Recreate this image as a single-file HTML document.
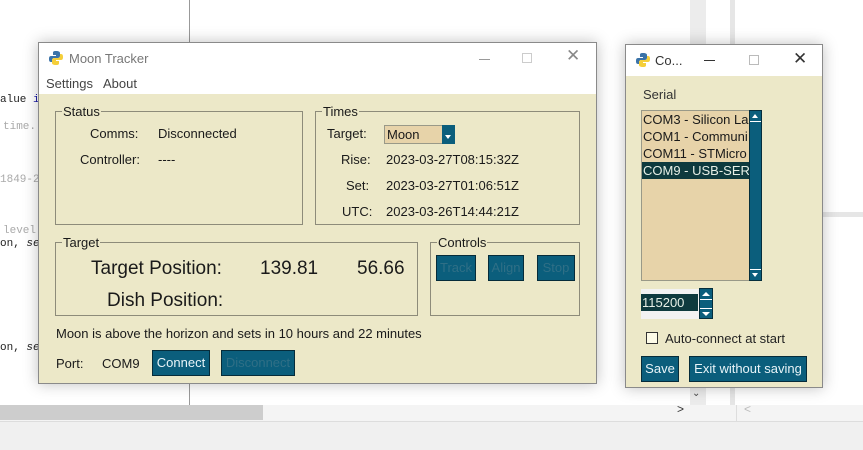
<!DOCTYPE html>
<html><head><style>
*{margin:0;padding:0;box-sizing:border-box}
body{width:863px;height:450px;position:relative;overflow:hidden;background:#fff;font-family:"Liberation Sans",sans-serif;font-size:13px;color:#1a1a1a}
.a{position:absolute;white-space:nowrap}
.code{font-family:"Liberation Mono",monospace;font-size:11px;color:#222}
.g{color:#aaa}
.win{position:absolute;background:#ECE8C8;border:1px solid #8a8a8a;box-shadow:0 0 14px rgba(0,0,0,.25)}
.tb{position:absolute;left:0;right:0;top:0;background:#fff}
.fr{position:absolute;border:1px solid #8d8b7a}
.fl{position:absolute;top:-8px;left:6px;background:#ECE8C8;padding:0 1px;font-size:13px}
.btn{position:absolute;background:#0B5E7C;border:1px solid #062c3a;color:#e8f4f8;text-align:center;font-size:13px;line-height:24px}
.dis{color:#2f6f86}
</style></head><body>
<div class="a" style="left:189px;top:0;width:1px;height:405px;background:#999"></div>
<div class="a" style="left:690px;top:0;width:16px;height:405px;background:#ececec"></div>
<div class="a" style="left:730px;top:0;width:5px;height:405px;background:#e6e6e6"></div>
<div class="a" style="left:822px;top:212px;width:41px;height:5px;background:#e6e6e6"></div>
<div class="a code" style="left:0;top:94px">alue <span style="color:#1a1aa6">in</span></div>
<div class="a code g" style="left:3px;top:121px">time.</div>
<div class="a code g" style="left:0;top:174px">1849-21</div>
<div class="a code g" style="left:3px;top:225px">level</div>
<div class="a code" style="left:0;top:238px">on, <i>sel</i></div>
<div class="a code" style="left:0;top:342px">on, <i>sel</i></div>
<div class="a" style="left:0;top:405px;width:863px;height:16px;background:#f4f4f4"></div>
<div class="a" style="left:0;top:405px;width:263px;height:15px;background:#cdcdcd"></div>
<div class="a" style="left:736px;top:405px;width:1px;height:16px;background:#ddd"></div>
<div class="a" style="left:677px;top:402px;font-size:12px;color:#333">&gt;</div>
<div class="a" style="left:744px;top:402px;font-size:12px;color:#bbb">&lt;</div>
<div class="a" style="left:0;top:421px;width:863px;height:29px;background:#f0f0f0;border-top:1px solid #ddd"></div>

<div class="win" style="left:38px;top:42px;width:559px;height:342px">
 <div class="tb" style="height:51px">
  <svg class="a" style="left:9px;top:7px" width="16" height="16" viewBox="0 0 16 16"><path d="M8 1C5 1 5 2 5 3v2h3v1H3C1 6 1 8 1 9s0 3 2 3h1v-2c0-1 1-2 2-2h4c1 0 2-1 2-2V3c0-1-1-2-4-2z" fill="#3b73a8"/><path d="M8 15c3 0 3-1 3-2v-2H8v-1h5c2 0 2-2 2-3s0-3-2-3h-1v2c0 1-1 2-2 2H6c-1 0-2 1-2 2v3c0 1 1 2 4 2z" fill="#f5cf3a"/></svg>
  <div class="a" style="left:30px;top:8px;color:#777;font-size:13px">Moon Tracker</div>
  <div class="a" style="left:440px;top:16px;width:11px;height:1px;background:#999"></div>
  <div class="a" style="left:483px;top:10px;width:10px;height:10px;border:1px solid #ccc"></div>
  <div class="a" style="left:527px;top:3px;font-size:17px;color:#888">✕</div>
  <div class="a" style="left:7px;top:33px;color:#444">Settings</div>
  <div class="a" style="left:64px;top:33px;color:#444">About</div>
 </div>
 <div class="fr" style="left:16px;top:68px;width:248px;height:114px"><div class="fl">Status</div></div>
 <div class="a" style="left:51px;top:83px">Comms:</div>
 <div class="a" style="left:119px;top:83px">Disconnected</div>
 <div class="a" style="left:41px;top:109px">Controller:</div>
 <div class="a" style="left:119px;top:109px">----</div>

 <div class="fr" style="left:276px;top:68px;width:265px;height:114px"><div class="fl">Times</div></div>
 <div class="a" style="left:288px;top:83px">Target:</div>
 <div class="a" style="left:345px;top:82px;width:61px;height:19px;background:#E7D3A9;border:1px solid #998;font-size:13px;line-height:17px;padding-left:2px">Moon</div>
 <div class="a" style="left:403px;top:82px;width:13px;height:19px;background:#0B5E7C"><div class="a" style="left:3px;top:10px;border-left:3px solid transparent;border-right:3px solid transparent;border-top:4px solid #fff"></div></div>
 <div class="a" style="left:302px;top:109px">Rise:</div>
 <div class="a" style="left:347px;top:109px">2023-03-27T08:15:32Z</div>
 <div class="a" style="left:307px;top:135px">Set:</div>
 <div class="a" style="left:347px;top:135px">2023-03-27T01:06:51Z</div>
 <div class="a" style="left:303px;top:161px">UTC:</div>
 <div class="a" style="left:347px;top:161px">2023-03-26T14:44:21Z</div>

 <div class="fr" style="left:16px;top:199px;width:363px;height:74px"><div class="fl">Target</div></div>
 <div class="a" style="left:52px;top:215px;font-size:19px">Target Position:</div>
 <div class="a" style="left:221px;top:215px;font-size:19px">139.81</div>
 <div class="a" style="left:318px;top:215px;font-size:19px">56.66</div>
 <div class="a" style="left:68px;top:247px;font-size:19px">Dish Position:</div>

 <div class="fr" style="left:391px;top:199px;width:150px;height:74px"><div class="fl">Controls</div></div>
 <div class="btn dis" style="left:397px;top:212px;width:40px;height:26px">Track</div>
 <div class="btn dis" style="left:449px;top:212px;width:36px;height:26px">Align</div>
 <div class="btn dis" style="left:498px;top:212px;width:38px;height:26px">Stop</div>

 <div class="a" style="left:17px;top:283px">Moon is above the horizon and sets in 10 hours and 22 minutes</div>
 <div class="a" style="left:17px;top:313px">Port:</div>
 <div class="a" style="left:63px;top:313px">COM9</div>
 <div class="btn" style="left:113px;top:307px;width:58px;height:26px">Connect</div>
 <div class="btn dis" style="left:182px;top:307px;width:74px;height:26px">Disconnect</div>
</div>

<div class="win" style="left:625px;top:44px;width:198px;height:344px">
 <div class="tb" style="height:31px">
  <svg class="a" style="left:9px;top:7px" width="16" height="16" viewBox="0 0 16 16"><path d="M8 1C5 1 5 2 5 3v2h3v1H3C1 6 1 8 1 9s0 3 2 3h1v-2c0-1 1-2 2-2h4c1 0 2-1 2-2V3c0-1-1-2-4-2z" fill="#3b73a8"/><path d="M8 15c3 0 3-1 3-2v-2H8v-1h5c2 0 2-2 2-3s0-3-2-3h-1v2c0 1-1 2-2 2H6c-1 0-2 1-2 2v3c0 1 1 2 4 2z" fill="#f5cf3a"/></svg>
  <div class="a" style="left:29px;top:8px;color:#333">Co...</div>
  <div class="a" style="left:78px;top:15px;width:11px;height:1px;background:#333"></div>
  <div class="a" style="left:123px;top:10px;width:10px;height:10px;border:1px solid #bbb"></div>
  <div class="a" style="left:167px;top:4px;font-size:17px;color:#333">✕</div>
 </div>
 <div class="a" style="left:17px;top:42px;color:#333">Serial</div>
 <div class="a" style="left:15px;top:65px;width:109px;height:171px;background:#E7D3A9;border:1px solid #998;overflow:hidden;line-height:17px">
  <div style="padding-left:1px">COM3 - Silicon La</div>
  <div style="padding-left:1px">COM1 - Communi</div>
  <div style="padding-left:1px">COM11 - STMicro</div>
  <div style="padding-left:1px;background:#0E3A3E;color:#e6efe6">COM9 - USB-SER</div>
 </div>
 <div class="a" style="left:123px;top:65px;width:13px;height:171px;background:#0B5E7C;border:1px solid #052e3c">
  <div class="a" style="left:0;top:0;width:11px;height:11px;background:#0B5E7C;border-bottom:1px solid #fff"><div class="a" style="left:2px;top:3px;border-left:3px solid transparent;border-right:3px solid transparent;border-bottom:4px solid #fff"></div></div>
  <div class="a" style="left:0;bottom:0;width:11px;height:11px;border-top:1px solid #fff"><div class="a" style="left:2px;top:3px;border-left:3px solid transparent;border-right:3px solid transparent;border-top:4px solid #fff"></div></div>
 </div>
 <div class="a" style="left:15px;top:244px;width:60px;height:30px;background:#f2f2f2"></div>
 <div class="a" style="left:15px;top:249px;width:57px;height:17px;background:#0E3A3E;color:#e6efe6;line-height:17px;padding-left:1px">115200</div>
 <div class="a" style="left:73px;top:243px;width:14px;height:31px;background:#0B5E7C;border:1px solid #052e3c">
  <div class="a" style="left:2px;top:3px;border-left:4px solid transparent;border-right:4px solid transparent;border-bottom:4px solid #fff"></div>
  <div class="a" style="left:0;top:10px;width:12px;height:10px;border-top:1px solid #fff;border-bottom:1px solid #fff"></div>
  <div class="a" style="left:2px;top:23px;border-left:4px solid transparent;border-right:4px solid transparent;border-top:4px solid #fff"></div>
 </div>
 <div class="a" style="left:20px;top:287px;width:12px;height:12px;background:#fdfbe8;border:1px solid #333"></div>
 <div class="a" style="left:39px;top:286px;color:#222">Auto-connect at start</div>
 <div class="btn" style="left:15px;top:311px;width:38px;height:26px">Save</div>
 <div class="btn" style="left:63px;top:311px;width:118px;height:26px">Exit without saving</div>
</div>
<div class="a" style="left:692px;top:388px;font-size:10px;color:#444">&#8964;</div>
</body></html>
